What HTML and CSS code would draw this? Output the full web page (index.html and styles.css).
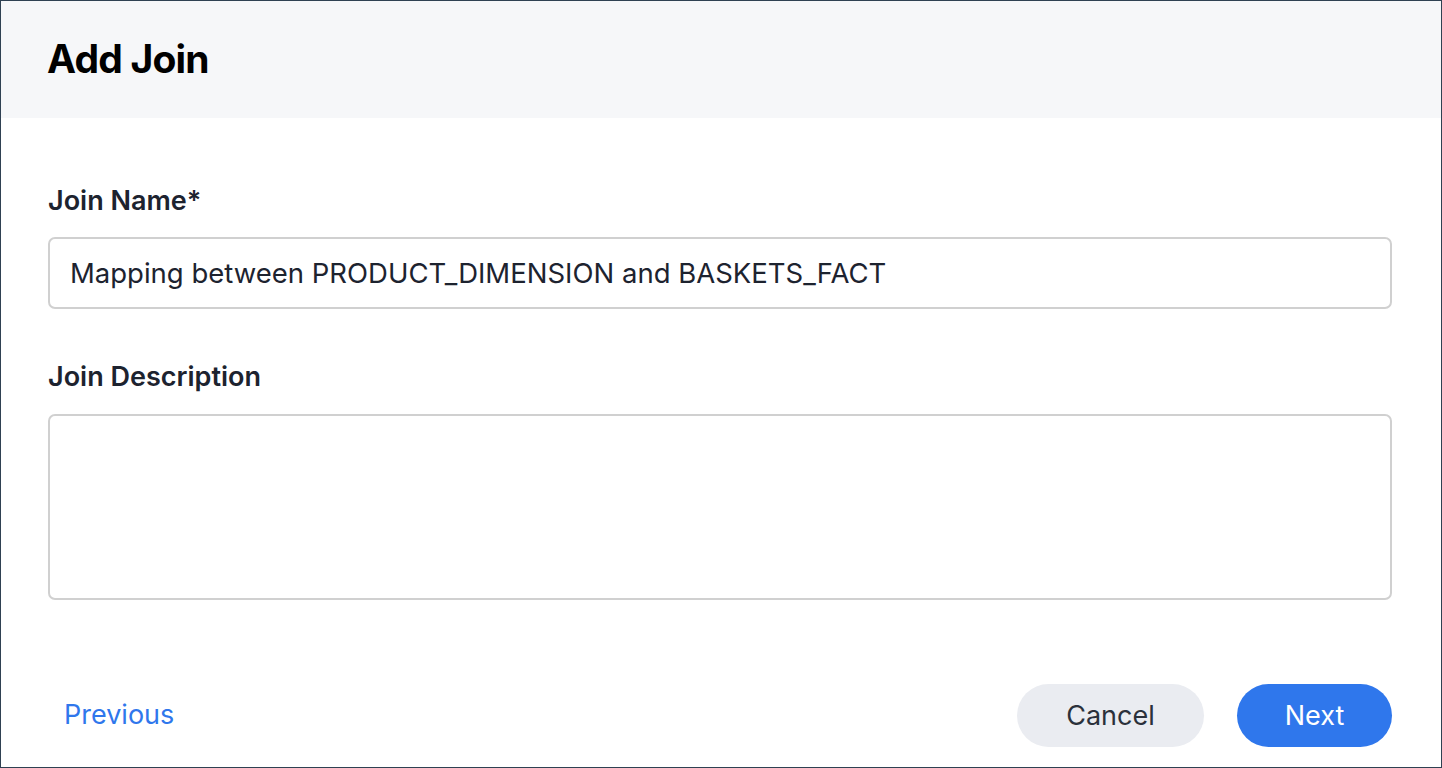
FILE: index.html
```html
<!DOCTYPE html>
<html lang="en">
<head>
<meta charset="utf-8">
<title>Add Join</title>
<link rel="stylesheet" href="styles.css">
</head>
<body>
<div class="dialog">
  <header class="dialog-header">
    <h1 class="dialog-title">Add Join</h1>
  </header>
  <main class="dialog-body">
    <div class="field">
      <label class="field-label" for="join-name">Join Name*</label>
      <input class="text-input" id="join-name" type="text" value="Mapping between PRODUCT_DIMENSION and BASKETS_FACT">
    </div>
    <div class="field field-desc">
      <label class="field-label" for="join-desc">Join Description</label>
      <textarea class="text-area" id="join-desc"></textarea>
    </div>
  </main>
  <footer class="dialog-footer">
    <button class="link-btn" type="button">Previous</button>
    <div class="actions">
      <button class="btn btn-secondary" type="button">Cancel</button>
      <button class="btn btn-primary" type="button">Next</button>
    </div>
  </footer>
</div>
</body>
</html>
```
FILE: styles.css
```css
* { box-sizing: border-box; }
html, body { margin: 0; padding: 0; }
body {
  font-family: Inter, "Noto Sans", "Liberation Sans", sans-serif;
  background: #ffffff;
  color: #1d232f;
}
.dialog {
  width: 1442px;
  height: 768px;
  border: 1px solid #2f4152;
  display: flex;
  flex-direction: column;
  background: #fff;
}
.dialog-header {
  height: 117px;
  background: #f6f7f9;
  display: flex;
  align-items: center;
  padding: 0 46px 3px;
  flex-shrink: 0;
}
.dialog-title {
  margin: 0;
  font-size: 39px;
  font-weight: 700;
  letter-spacing: -0.8px;
  color: #000;
}
.dialog-body {
  padding: 68px 49px 0 47px;
  display: flex;
  flex-direction: column;
  gap: 53px;
}
.field {
  display: flex;
  flex-direction: column;
  gap: 21px;
}
.field-desc {
  gap: 22px;
}
.field-label {
  font-size: 27px;
  font-weight: 600;
  color: #1d232f;
  line-height: 30px;
}
.text-input, .text-area {
  width: 100%;
  border: 2px solid #d0d0d0;
  border-radius: 7px;
  font-family: inherit;
  font-size: 27.5px;
  color: #1d232f;
  background: #fff;
  outline: none;
}
.text-input {
  height: 72px;
  padding: 0 20px;
}
.text-area {
  height: 186px;
  resize: none;
  padding: 16px 20px;
}
.dialog-footer {
  margin-top: auto;
  padding: 0 49px 20px 47px;
  display: flex;
  align-items: center;
  justify-content: space-between;
}
.link-btn {
  background: none;
  border: none;
  padding: 0 0 2px 16px;
  font-family: inherit;
  font-size: 27px;
  color: #2f77ec;
  cursor: pointer;
}
.actions {
  display: flex;
  gap: 33px;
}
.btn {
  height: 63px;
  border: none;
  border-radius: 32px;
  font-family: inherit;
  font-size: 27px;
  cursor: pointer;
}
.btn-secondary {
  width: 187px;
  background: #eaecf1;
  color: #2b313b;
}
.btn-primary {
  width: 155px;
  background: #2f77ec;
  color: #fff;
}
```
